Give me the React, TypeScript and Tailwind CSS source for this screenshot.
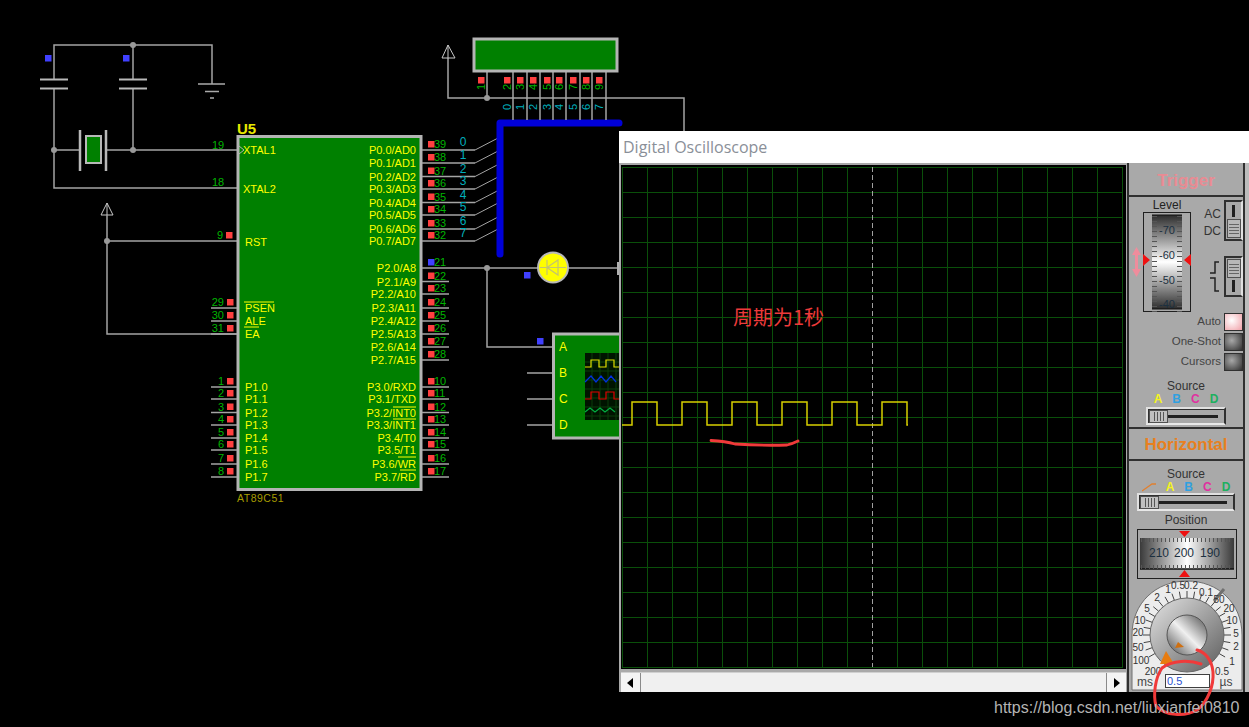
const GRAY = '#a4a4a4';
const PIN_GREEN = '#00b400';
const LABEL = '#ffff00';
const TEAL = '#00aebc';

const P0_Y = [150, 163, 176.5, 189, 202.5, 215, 229, 241];
const P2_Y = [268, 281.5, 294, 308, 321, 334, 347, 360];
const P3_Y = [387, 399, 412.5, 425, 438, 450, 464, 477];
const P1_Y = [387, 399, 412.5, 425, 438, 450, 464, 477];
const P3_NAMES = ['P3.0/RXD', 'P3.1/TXD', 'P3.2/INT0', 'P3.3/INT1', 'P3.4/T0', 'P3.5/T1', 'P3.6/WR', 'P3.7/RD'];
const LCD_X = [513, 527, 540, 553, 566, 580, 592, 606];
const LCD_RED = [507, 520, 533, 547, 559, 573, 586, 599];

function Line({ d, w = 1.5, c = GRAY }: { d: string; w?: number; c?: string }) {
  return <path d={d} fill="none" stroke={c} strokeWidth={w} />;
}

function Dot({ x, y }: { x: number; y: number }) {
  return <circle cx={x} cy={y} r={3} fill="#999999" />;
}

function Sq({ x, y, c = '#ff4040' }: { x: number; y: number; c?: string }) {
  return <rect x={x - 3} y={y - 3} width={6.5} height={6.5} fill={c} />;
}

function PinRight({ y, n, blue, len = 27 }: { y: number; n: number; blue?: boolean; len?: number }) {
  return (
    <g>
      <Line d={`M422 ${y}H${422 + len}`} />
      <Sq x={431} y={y - 6} c={blue ? '#4040ff' : '#ff4040'} />
      <text x={434} y={y - 2} fontSize={11} fill={PIN_GREEN}>{n}</text>
    </g>
  );
}

function PinLeft({ y, n }: { y: number; n: number }) {
  return (
    <g>
      <Line d={`M211 ${y}H237`} />
      <Sq x={230} y={y - 6} />
      <text x={224} y={y - 2} fontSize={11} fill={PIN_GREEN} textAnchor="end">{n}</text>
    </g>
  );
}

function Schematic() {
  return (
    <svg width={1249} height={727} className="absolute inset-0 font-['Liberation_Sans']">
      {/* crystal and caps */}
      <Line d="M54 79V45H212V84" />
      <Line d="M133 45V79M133 88V150M54 88V188H237M54 150H80M107 150H237" />
      <Dot x={133} y={45} />
      <Dot x={54} y={150} />
      <Dot x={133} y={150} />
      <Line d="M40 79.5H68M40 88.5H68M119 79.5H147M119 88.5H147" w={2} c="#b8b8b8" />
      <Line d="M198 84H225M205 91.5H219M210 98H214" w={1.5} c="#aaaaaa" />
      <Sq x={48} y={58} c="#4040ff" />
      <Sq x={126} y={58} c="#4040ff" />
      <Line d="M80 130V171M106 130V171" w={2.5} c="#b8b8b8" />
      <rect x={86} y={136} width={15} height={27} fill="#008000" stroke="#b8b8b8" strokeWidth={2} />

      {/* reset / EA */}
      <path d="M107 203L101 215H113ZM107 203V215" fill="none" stroke="#c8c8c8" strokeWidth={1} />
      <Line d="M107 215V334H237M107 241H237" />
      <Dot x={107} y={241} />
      <text x={217} y={239} fontSize={11} fill={PIN_GREEN}>9</text>
      <Sq x={229} y={235} />
      <text x={212} y={149} fontSize={11} fill={PIN_GREEN}>19</text>
      <text x={212} y={186} fontSize={11} fill={PIN_GREEN}>18</text>

      {/* chip */}
      <rect x={238} y={136.5} width={183} height={353} fill="#008000" stroke="#b4b4b4" strokeWidth={3} />
      <text x={237} y={134} fontSize={15} fontWeight="bold" fill="#e8e800">U5</text>
      <path d="M239 146L244 150L239 154" fill="none" stroke="#b4b4b4" />
      <text x={237} y={502} fontSize={10.5} fill="#a89c00" letterSpacing={0.5}>AT89C51</text>
      <g fontSize={11} fill={LABEL}>
        <text x={243} y={154}>XTAL1</text>
        <text x={243} y={193}>XTAL2</text>
        <text x={245} y={246}>RST</text>
        <text x={245} y={312}>PSEN</text>
        <text x={245} y={325}>ALE</text>
        <text x={245} y={338}>EA</text>
        {P1_Y.map((y, i) => (
          <text key={i} x={245} y={y + 4}>{`P1.${i}`}</text>
        ))}
      </g>
      <g fontSize={11} fill={LABEL} textAnchor="end">
        {P0_Y.map((y, i) => (
          <text key={i} x={416} y={y + 4}>{`P0.${i}/AD${i}`}</text>
        ))}
        {P2_Y.map((y, i) => (
          <text key={i} x={416} y={y + 4}>{`P2.${i}/A${i + 8}`}</text>
        ))}
        {P3_Y.map((y, i) => (
          <text key={i} x={416} y={y + 4}>{P3_NAMES[i]}</text>
        ))}
      </g>
      <Line d="M244 302H274M244 327H259M393 407H416M393 419H416M398 457H416M400 470H416" w={1} c={LABEL} />

      {/* left pins */}
      <PinLeft y={308} n={29} />
      <PinLeft y={321} n={30} />
      <PinLeft y={334} n={31} />
      {P1_Y.map((y, i) => (
        <PinLeft key={i} y={y} n={i + 1} />
      ))}

      {/* P0 with bus entries */}
      {P0_Y.map((y, i) => (
        <g key={i}>
          <PinRight y={y} n={39 - i} len={53} />
          <Line d={`M475 ${y}L500 ${y - 13}`} w={1} />
          <text x={463} y={y - 4} fontSize={12} fill={TEAL} textAnchor="middle">{i}</text>
        </g>
      ))}
      <path d="M500 254V123H619" fill="none" stroke="#0000d8" strokeWidth={7} strokeLinecap="round" strokeLinejoin="round" />

      {/* P2, P3 */}
      {P2_Y.map((y, i) =>
        i === 0 ? <PinRight key={i} y={y} n={21} blue len={0} /> : <PinRight key={i} y={y} n={21 + i} />,
      )}
      {P3_Y.map((y, i) => (
        <PinRight key={i} y={y} n={10 + i} />
      ))}

      {/* LCD */}
      <Line d="M448 58V98H684V131M487 71V98" />
      <Dot x={487} y={98} />
      <path d="M448 45L442 58H455ZM448 45V58" fill="none" stroke="#c8c8c8" strokeWidth={1} />
      {LCD_X.map(x => (
        <Line key={x} d={`M${x} 71V120`} />
      ))}
      <rect x={474} y={39} width={143} height={32} fill="#008000" stroke="#b4b4b4" strokeWidth={3} />
      <Sq x={481} y={80} />
      <text x={0} y={0} fontSize={11} fill={PIN_GREEN} transform="translate(485 90) rotate(-90)">1</text>
      {LCD_RED.map((x, i) => (
        <g key={x}>
          <Sq x={x} y={80} />
          <text x={0} y={0} fontSize={11} fill={PIN_GREEN} transform={`translate(${x + 4} 90) rotate(-90)`}>{i + 2}</text>
          <text x={0} y={0} fontSize={11} fill={TEAL} transform={`translate(${x + 4} 110) rotate(-90)`}>{i}</text>
        </g>
      ))}

      {/* LED and probe wires */}
      <Line d="M422 268H619M487 268V347H553M527 373H553M527 399H553M527 425H553" />
      <Dot x={487} y={268} />
      <Sq x={527} y={275} c="#4040ff" />
      <Sq x={540} y={341} c="#4040ff" />
      <circle cx={553} cy={267.5} r={15} fill="#ffff00" stroke="#b8b8b8" strokeWidth={2} />
      <path d="M547 260V275M547 267.5L558 260V275ZM540 267.5H566" fill="none" stroke="#c4c470" strokeWidth={1.2} />
      <rect x={617} y={262} width={3} height={13} fill="#b0b0b0" />

      {/* virtual scope icon */}
      <rect x={553.5} y={334} width={80} height={104} fill="#008000" stroke="#b4b4b4" strokeWidth={3} />
      <g fontSize={12} fill={LABEL}>
        <text x={559} y={351}>A</text>
        <text x={559} y={377}>B</text>
        <text x={559} y={403}>C</text>
        <text x={559} y={429}>D</text>
      </g>
      <rect x={585} y={353} width={40} height={67} fill="#001400" />
      <path d="M585 362H625M585 371H625M585 380H625M585 389H625M585 398H625M585 407H625M585 416H625M592 353V420M600 353V420M608 353V420M616 353V420" stroke="#0a3c0a" />
      <path d="M585 367H591V360H599V367H606V360H614V367H620" fill="none" stroke="#e0e000" strokeWidth={1.2} />
      <path d="M585 382L591 376L596 382L601 376L606 382L611 376L616 382" fill="none" stroke="#0030e0" strokeWidth={1.2} />
      <path d="M585 399H591V392H599V399H606V392H614V399H620" fill="none" stroke="#e00000" strokeWidth={1.2} />
      <path d="M585 412L590 408L595 412L600 408L605 412L610 408L615 412" fill="none" stroke="#00b040" strokeWidth={1.2} />
    </svg>
  );
}

function ScopeScreen() {
  const xs = Array.from({ length: 21 }, (_, i) => 1 + 25 * i).filter(x => x !== 251);
  const ys = Array.from({ length: 21 }, (_, i) => 2 + 25 * i);
  let wave = 'M1 260H11';
  for (let i = 0; i < 6; i++) {
    const x = 11 + i * 50;
    wave += `V237H${x + 25}V260H${x + 50}`;
  }
  wave = wave.replace(/H311$/, 'H287V260');
  return (
    <svg width={505} height={504} className="block bg-black">
      {xs.map(x => (
        <path key={x} d={`M${x + 0.5} 2V502`} stroke="#0a4f0a" />
      ))}
      {ys.map(y => (
        <path key={y} d={`M1 ${y + 0.5}H502`} stroke="#0a4f0a" />
      ))}
      <path d="M251.5 2V502" stroke="#a0a0a0" strokeDasharray="5 3" />
      <path d={wave} fill="none" stroke="#d8d000" strokeWidth={1.5} />
    </svg>
  );
}

function ScrollBar() {
  return (
    <div className="flex h-[20px] bg-[#f0f0f0] border-t border-[#d0d0d0] items-stretch">
      <div className="w-[20px] flex items-center justify-center border-r border-[#8a8a8a] bg-[#f4f4f4]">
        <svg width={7} height={10}><path d="M6 0V10L0 5Z" fill="#000" /></svg>
      </div>
      <div className="flex-1" />
      <div className="w-[20px] flex items-center justify-center border-l border-[#8a8a8a] bg-[#f4f4f4]">
        <svg width={7} height={10}><path d="M1 0V10L7 5Z" fill="#000" /></svg>
      </div>
    </div>
  );
}

function VToggle({ knobTop }: { knobTop: boolean }) {
  const knob = (
    <div className="w-[14px] h-[19px] bg-[#b8b8b8] border border-[#505050] flex flex-col justify-center gap-[2px] px-[1px]">
      <div className="h-px bg-[#666666]" />
      <div className="h-px bg-[#666666]" />
      <div className="h-px bg-[#666666]" />
      <div className="h-px bg-[#666666]" />
    </div>
  );
  return (
    <div className={`w-[19px] h-[41px] border-2 border-t-[#303030] border-l-[#303030] border-r-[#e0e0e0] border-b-[#303030] flex flex-col items-center py-px ${knobTop ? '' : 'justify-end'}`}>
      {knobTop && knob}
      <div className="w-[3px] flex-1 bg-[#202020] my-[2px]" />
      {!knobTop && knob}
    </div>
  );
}

function HSlider({ w }: { w: string }) {
  return (
    <div className={`${w} h-[18px] mx-auto border-2 border-t-[#e0e0e0] border-l-[#e0e0e0] border-r-[#303030] border-b-[#e8e8e8] flex items-center bg-[#a8a8a8] shadow-[inset_1px_1px_0_#303030]`}>
      <div className="w-[19px] h-[13px] ml-px bg-[#c0c0c0] border border-[#505050] flex justify-center gap-[2px] py-px">
        <div className="w-px bg-[#555555]" />
        <div className="w-px bg-[#555555]" />
        <div className="w-px bg-[#555555]" />
        <div className="w-px bg-[#555555]" />
      </div>
      <div className="flex-1 h-[3px] bg-[#202020] mr-[6px]" />
    </div>
  );
}

function LevelDrum() {
  const ticks = Array.from({ length: 21 }, (_, i) => 4 + i * 5);
  const labels = [['-70', 22], ['-60', 47], ['-50', 72], ['-40', 96]] as const;
  return (
    <svg width={48} height={100} className="block">
      <defs>
        <linearGradient id="lev" x1="0" y1="0" x2="0" y2="1">
          <stop offset="0" stopColor="#2c2c2c" />
          <stop offset="0.5" stopColor="#ffffff" />
          <stop offset="1" stopColor="#2c2c2c" />
        </linearGradient>
      </defs>
      <rect x={0.5} y={0.5} width={47} height={99} fill="#a8a8a8" stroke="#202020" />
      <rect x={9} y={3} width={30} height={94} fill="url(#lev)" />
      <path d="M9 3H39M9 97H39" stroke="#111" />
      {ticks.map(y => (
        <path key={y} d={`M9 ${y + 0.5}H14M34 ${y + 0.5}H39`} stroke="#555" />
      ))}
      {labels.map(([t, y]) => (
        <text key={t} x={24} y={y} fontSize={11} fill="#1c3040" textAnchor="middle">{t}</text>
      ))}
      <path d="M0 42L7 48L0 54ZM48 42L41 48L48 54Z" fill="#ee1111" />
    </svg>
  );
}

function PositionDrum() {
  const ticks = Array.from({ length: 23 }, (_, i) => 4 + i * 4);
  return (
    <svg width={100} height={50} className="block mx-auto">
      <defs>
        <linearGradient id="pos" x1="0" y1="0" x2="1" y2="0">
          <stop offset="0" stopColor="#3a3a3a" />
          <stop offset="0.5" stopColor="#ffffff" />
          <stop offset="1" stopColor="#3a3a3a" />
        </linearGradient>
      </defs>
      <rect x={0.5} y={0.5} width={99} height={49} fill="#a8a8a8" stroke="#202020" />
      <rect x={3} y={9} width={94} height={31} fill="url(#pos)" />
      <path d="M3 40H97" stroke="#111" strokeWidth={1.5} />
      {ticks.map(x => (
        <path key={x} d={`M${x + 0.5} 9V13M${x + 0.5} 36V40`} stroke="#555" />
      ))}
      <text x={22} y={28} fontSize={12} fill="#1c3040" textAnchor="middle">210</text>
      <text x={47} y={28} fontSize={12} fill="#1c3040" textAnchor="middle">200</text>
      <text x={73} y={28} fontSize={12} fill="#1c3040" textAnchor="middle">190</text>
      <path d="M42 2H53L47.5 8ZM42 48H53L47.5 41Z" fill="#ee1111" />
    </svg>
  );
}

function Dial() {
  // label positions are page coordinates minus the dial's origin (1129, 580)
  const labels: [string, number, number][] = [
    ['0.5', 1178, 589], ['0.2', 1191, 589], ['0.1', 1206, 596], ['1', 1168, 593], ['2', 1157, 601],
    ['5', 1147, 612], ['10', 1140, 624], ['20', 1138, 636], ['50', 1138, 651], ['100', 1141, 664],
    ['200', 1153, 675], ['50', 1219, 603], ['20', 1229, 612], ['10', 1232, 624], ['5', 1236, 637],
    ['2', 1236, 650], ['1', 1232, 665], ['0.5', 1222, 675],
  ];
  const ticks = Array.from({ length: 25 }, (_, i) => (i * 240) / 24 - 210);
  return (
    <svg width={114} height={111} className="block">
      <defs>
        <linearGradient id="knobA" x1="0" y1="0" x2="1" y2="1">
          <stop offset="0" stopColor="#e4e4e4" />
          <stop offset="1" stopColor="#5c5c5c" />
        </linearGradient>
        <linearGradient id="knobB" x1="0.1" y1="0.9" x2="0.9" y2="0.1">
          <stop offset="0" stopColor="#6a6a6a" />
          <stop offset="0.5" stopColor="#f0f0f0" />
          <stop offset="1" stopColor="#6a6a6a" />
        </linearGradient>
      </defs>
      <path d="M3 110V55C3 23 27 1 58 1C89 1 113 23 113 55V110Z" fill="#ececec" stroke="#707070" />
      {ticks.map(a => {
        const r = (a * Math.PI) / 180;
        const c = Math.cos(r);
        const s = Math.sin(r);
        return <path key={a} d={`M${58 + 37 * c} ${55 + 37 * s}L${58 + 44 * c} ${55 + 44 * s}`} stroke="#444" />;
      })}
      <path d="M85 21L95 9" stroke="#707070" strokeWidth={3} />
      {labels.map(([t, x, y], i) => (
        <text key={i} x={x - 1129} y={y - 580} fontSize={10} fill="#333" textAnchor="middle">{t}</text>
      ))}
      <text x={16} y={106} fontSize={12} fill="#444" textAnchor="middle">ms</text>
      <text x={97} y={106} fontSize={12} fill="#444" textAnchor="middle">µs</text>
      <circle cx={58} cy={55} r={37} fill="url(#knobA)" stroke="#666" />
      <circle cx={58} cy={55} r={20} fill="url(#knobB)" stroke="#555" />
      <path d="M37 71L45 84L31 84Z" fill="#e87c10" />
      <path d="M49 62L55 67L46 68Z" fill="#d07010" />
    </svg>
  );
}

function Btn({ label, lit }: { label: string; lit?: boolean }) {
  return (
    <div className="flex items-center justify-end h-[18px]">
      <span className="text-[11.5px] text-[#444444] mr-[3px]">{label}</span>
      <div className={`w-[19px] h-[18px] border border-[#303030] ${lit ? 'bg-[radial-gradient(circle_at_40%_40%,#ffffff,#f0a0a8)]' : 'bg-[radial-gradient(circle_at_40%_40%,#a8a8a8,#303030)]'}`} />
    </div>
  );
}

function SourceLetters() {
  return (
    <>
      <span className="text-[#f4f420]">A</span>
      <span className="text-[#30a0e0]">B</span>
      <span className="text-[#e030a0]">C</span>
      <span className="text-[#20b060]">D</span>
    </>
  );
}

function ControlPanel() {
  return (
    <div className="flex flex-1 bg-[#a9a9a9] border-l-2 border-[#303030] font-['Liberation_Sans',sans-serif]">
      <div className="w-[116px] flex flex-col border-r-2 border-[#303030]">
        <div className="h-[34px] pt-[4px] flex items-center justify-center text-[17px] font-bold text-[#e98b93] border-b-2 border-[#303030]">
          Trigger
        </div>
        <div className="h-[232px] flex flex-col border-b-2 border-[#303030]">
          <div className="h-[116px] flex">
            <div className="w-[14px] flex items-center justify-center pt-[14px]">
              <svg width={9} height={30}><path d="M4.5 0L9 8H6V22H9L4.5 30L0 22H3V8H0Z" fill="#ef8c9c" /></svg>
            </div>
            <div className="w-[48px]">
              <div className="h-[15px] flex items-center justify-center text-[12px] text-[#222222]">Level</div>
              <LevelDrum />
            </div>
            <div className="flex-1 flex flex-col items-end pt-[3px]">
              <div className="flex">
                <div className="flex flex-col mr-[3px] text-[12px] leading-[17px] text-[#333333] text-right pt-[6px]">
                  <span>AC</span>
                  <span>DC</span>
                </div>
                <VToggle knobTop={false} />
              </div>
              <div className="flex mt-[15px]">
                <svg width={14} height={36} className="mr-[4px] mt-[4px]">
                  <path d="M4 13H9V2H13M4 18H9V31H13" fill="none" stroke="#222" strokeWidth={1.5} />
                </svg>
                <VToggle knobTop />
              </div>
            </div>
          </div>
          <div className="flex flex-col gap-[2px]">
            <Btn label="Auto" lit />
            <Btn label="One-Shot" />
            <Btn label="Cursors" />
          </div>
          <div className="mt-[9px] text-[12px] leading-[13px] text-center text-[#333333]">Source</div>
          <div className="flex justify-center gap-[10px] text-[12px] leading-[13px] font-bold"><SourceLetters /></div>
          <div className="mt-px"><HSlider w="w-[80px]" /></div>
        </div>
        <div className="h-[32px] pt-[2px] flex items-center justify-center text-[17px] font-bold text-[#e88020] border-b-2 border-[#303030]">
          Horizontal
        </div>
        <div className="flex-1 flex flex-col">
          <div className="mt-[7px] text-[12px] leading-[13px] text-center text-[#333333]">Source</div>
          <div className="flex justify-center items-center gap-[10px] text-[12px] leading-[12px] font-bold">
            <svg width={14} height={10}><path d="M0 9L10 2H14" fill="none" stroke="#e08030" strokeWidth={1.3} /></svg>
            <SourceLetters />
          </div>
          <div><HSlider w="w-[98px]" /></div>
          <div className="mt-[3px] text-[12px] leading-[13px] text-center text-[#333333]">Position</div>
          <div className="mt-[2px] pl-[2px]"><PositionDrum /></div>
          <div className="relative mt-px">
            <Dial />
            <div className="absolute left-[36px] top-[94px] w-[45px] h-[14px] bg-white border border-[#404040] text-[11px] leading-[13px] px-px text-[#2a50d0]">0.5</div>
          </div>
        </div>
      </div>
      <div className="flex-1 bg-[#bcbcbc]" />
    </div>
  );
}

function Overlay() {
  return (
    <svg width={1249} height={727} className="absolute inset-0 pointer-events-none">
      <path d="M711 440.5C720 441 728 442 735 444C750 445 772 445.5 787 445C791 444 795 442.5 798 441" fill="none" stroke="#f03a3a" strokeWidth={2.8} strokeLinecap="round" />
      <path d="M1201 664C1190 660 1172 660 1162 668C1155 678 1153 695 1156 706C1165 716 1185 717 1197 710C1208 702 1214 685 1213 672C1212 660 1205 652 1197 650" fill="none" stroke="#f03a3a" strokeWidth={3} strokeLinecap="round" />
    </svg>
  );
}

export default function App() {
  return (
    <div className="relative w-[1249px] h-[727px] bg-black overflow-hidden">
      <Schematic />

      {/* oscilloscope window */}
      <div className="absolute left-[619px] top-[131px] right-0 h-[561px] flex flex-col bg-[#a9a9a9]">
        <div className="h-[32px] bg-white flex items-center pl-[4px] text-[16px] text-[#8a8f98] font-['Open_Sans',sans-serif]">
          Digital Oscilloscope
        </div>
        <div className="flex-1 flex">
          <div className="w-[508px] flex flex-col pl-[2px] pt-[2px]">
            <div className="w-[505px]">
              <ScopeScreen />
            </div>
            <div className="mt-[3px] mr-px">
              <ScrollBar />
            </div>
          </div>
          <ControlPanel />
        </div>
        {/* handwritten note over the screen */}
        <span className="absolute left-[114px] top-[173px] text-[20px] leading-[26px] text-[#ee3a3a] font-['Noto_Sans_CJK_SC',sans-serif]">
          周期为1秒
        </span>
      </div>

      <Overlay />

      <span className="absolute left-[994px] top-[698px] text-[16px] leading-[20px] text-[#b4b4b4] font-['Liberation_Sans',sans-serif]">
        https://blog.csdn.net/liuxianfei0810
      </span>
    </div>
  );
}
